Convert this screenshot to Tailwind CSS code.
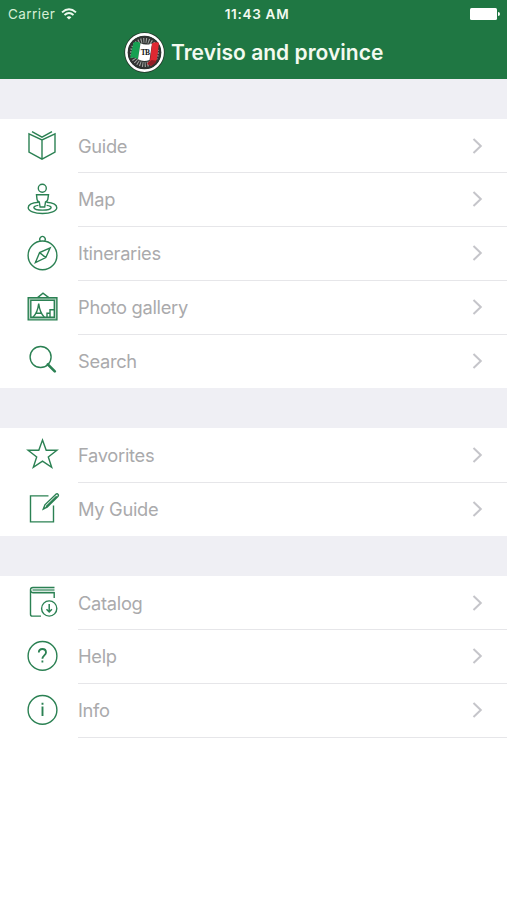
<!DOCTYPE html>
<html lang="en">
<head>
<meta charset="utf-8">
<title>Treviso and province</title>
<script src="https://cdn.jsdelivr.net/npm/@tailwindcss/browser@4"></script>
</head>
<body class="bg-white">
<div class="w-[507px] h-[900px] overflow-hidden bg-white font-[Inter,'Liberation_Sans',sans-serif]">
  <header class="h-[79px] bg-[#1f7743] text-[#f3faf0] flex flex-col">
    <div class="h-7 grid grid-cols-3 items-center pl-2 pr-[7px] text-[13.5px]">
      <div class="flex items-center gap-[6px]"><span class="tracking-[0.45px] text-[#d5efd5]">Carrier</span>
        <svg width="16" height="12" viewBox="0 0 16 12" fill="none" stroke="#eefaee" stroke-width="1.9"><path d="M1 4.4Q8-2 15 4.4M3.5 7Q8 3 12.5 7"/><path d="M5.6 9.2Q8 7.2 10.4 9.2L8 11.6Z" fill="#eefaee" stroke="none"/></svg>
      </div>
      <div class="text-center font-semibold text-[13.5px] tracking-[0.7px] pl-[6px] pt-px whitespace-nowrap">11:43 AM</div>
      <svg class="justify-self-end" width="30" height="12" viewBox="0 0 30 12" fill="#fff"><rect width="27" height="12" rx="1.5"/><path d="M28 4q2 0 2 2t-2 2z"/></svg>
    </div>
    <div class="h-[48px] flex items-center pl-[124px] gap-[6px]">
      <svg width="41" height="41" viewBox="0 0 41 41">
        <circle cx="20.5" cy="20.5" r="20.2" fill="#24362b"/><circle cx="20.5" cy="20.5" r="18.1" fill="none" stroke="#fff" stroke-width="2.6"/>
        <circle cx="20.5" cy="20.5" r="16.6" fill="#303332"/>
        <circle cx="20.5" cy="20.5" r="12" fill="none" stroke="#a4a8a5" stroke-width="5" stroke-dasharray="1 1.5"/>
        <path d="M9.5 10.5q4-1.700 7 .8l-2.500 16q-3.500-2.800-8-1z" fill="#16a052"/>
        <path d="M16.500 11.300q5 2.500 11.500.1l-2.500 16.500q-6 2.400-11.500-.6z" fill="#fff"/>
        <path d="M28 11.400q3.500-2 7-.7l-2 16.600q-1.500 3.700-6 6.500l-4-1.700 3-3.700z" fill="#df2832"/>
        <path d="M23.500 31.600l4-3.500 5 .6q-1 3-5.500 5.200z" fill="#931d27"/>
        <text x="21" y="22.500" text-anchor="middle" font-family="Liberation Serif" font-weight="700" font-size="7.500" letter-spacing="-0.800" fill="#111">TB</text>
      </svg>
      <h1 class="text-[21px] font-semibold leading-none tracking-[0.02px] whitespace-nowrap">Treviso and province</h1>
    </div>
  </header>
  <main id="menu" class="bg-[#efeff4] pt-[40px]"></main>
</div>
<script>
const icons = {
 guide: [119, '<path d="M29 133.8L42 140l13-6.2v18.4l-13 7-13-7zM42 140v19.2M32 131.6l10 5.600 10-5.600"/>'],
 map: [172.8, '<circle cx="42.3" cy="188" r="4"/><path d="M36.500 194.500h12l-.7 4.600q-.4 2-2.300 2.700l-.8 5h-4.600l-.8-5q-2-.7-2.300-2.700zM38.500 202q-10.300.7-10.300 5.600c0 3.200 6.200 5.700 14.300 5.700s14.300-2.500 14.300-5.700q0-4.900-10.300-5.600M38.400 205.200q-5 .6-4.500 2.300c.5 1.600 4.200 2.400 8.600 2.400s8.100-.8 8.600-2.400q.5-1.700-4.500-2.300"/>'],
 compass: [226.6, '<circle cx="42.5" cy="255" r="14.4"/><path d="M40.400 240.500a2.700 2.700 0 1 1 4.200 0M50.200 247.400l-4.400 9.800-10.400 5 4.200-10zM39.600 252.200l6.200 5"/>'],
 photo: [280.4, '<path d="M28.200 298.100h28.700v22.200H28.200z"/><path d="M30.800 300.700h23.500v17H30.800z"/><path d="M29 299.300h27v19.800H29z" opacity=".45"/><path d="M37.600 298l5.400-4.400 5.800 4.400M33 317.600q4.500-4 5.700-13.500 1.200 9.500 5.700 13.500M35.800 313.600h6M47 317.600v-4h3v4M50 313.600v-3.400h4"/>'],
 search: [334.2, '<circle cx="40.6" cy="357.200" r="10.500"/><path d="M47.800 364.600l7 7" stroke-width="2.700" stroke-linecap="round"/>'],
 star: [428.5, '<path d="M42.500 440.500l3.700 10.300h10.700l-8.600 6.600 3.400 10.500-9.200-6.200-9.200 6.200 3.400-10.500-8.600-6.600h10.700z"/>'],
 edit: [482.3, '<path d="M48.500 496.200h-18v26h23v-16.500M43.300 509.300l1.600-4.200 11-10.600q1.300-.8 2.200.2.800 1-.2 2.100l-10.800 10.700zM46 507l10.700-10.500"/>'],
 catalog: [576, '<path d="M54.500 587.500H33q-2.500 0-2.500 2.300v24.400q0 1.900 1.900 1.900h8.600M30.700 590.200q.2 2.500 2.500 2.500h21v5.300"/><path d="M32.500 590.100h22" stroke-width="2.400" opacity=".6"/><circle cx="49.200" cy="608.500" r="7.600"/><path d="M49.200 604v8M46.500 609.200l2.700 2.800 2.700-2.800" stroke-width="1.500"/>'],
 help: [629.8, '<circle cx="42.500" cy="655.700" r="14.400"/><path d="M38.800 652.400q0-3.600 3.600-3.600t3.600 3.400c0 2.700-3.600 3.200-3.600 6.300M42.400 660.300v2" stroke-width="1.800"/>'],
 info: [683.6, '<circle cx="42.500" cy="709.500" r="14.400"/><path d="M42.500 706v9.500M42.500 702.300v2.100" stroke-width="1.900"/>']
};
const groups = [
 [['guide','Guide'],['map','Map'],['compass','Itineraries'],['photo','Photo gallery'],['search','Search']],
 [['star','Favorites'],['edit','My Guide']],
 [['catalog','Catalog'],['help','Help'],['info','Info']]
];
document.getElementById('menu').innerHTML = groups.map((g, gi) =>
 `<section class="bg-white ${gi === 0 ? 'mb-[40.5px]' : gi === 1 ? 'mb-[39.9px]' : 'h-[325px]'}">` + g.map(([k, label], i) =>
 `<a class="flex h-[53.8px] w-full text-[#aaaaac]">
   <svg class="w-[78px] h-[53.8px] shrink-0" viewBox="0 ${icons[k][0]} 78 53.8" fill="none" stroke="#2b8153" stroke-width="1.4">${icons[k][1]}</svg>
   <span class="flex flex-1 h-[54.4px] items-center justify-between pr-[24px] ${i < g.length - 1 || gi === 2 ? 'border-b border-[#e6e6e9]' : ''}">
     <span class="text-[18.3px] leading-6 tracking-[-0.3px]">${label}</span>
     <svg width="11" height="16" viewBox="0 0 11 16" fill="none" stroke="#c5c5ca" stroke-width="2"><path d="M1.5 1l7.3 7-7.3 7"/></svg>
   </span>
 </a>`).join('') + '</section>').join('');
</script>
</body>
</html>
